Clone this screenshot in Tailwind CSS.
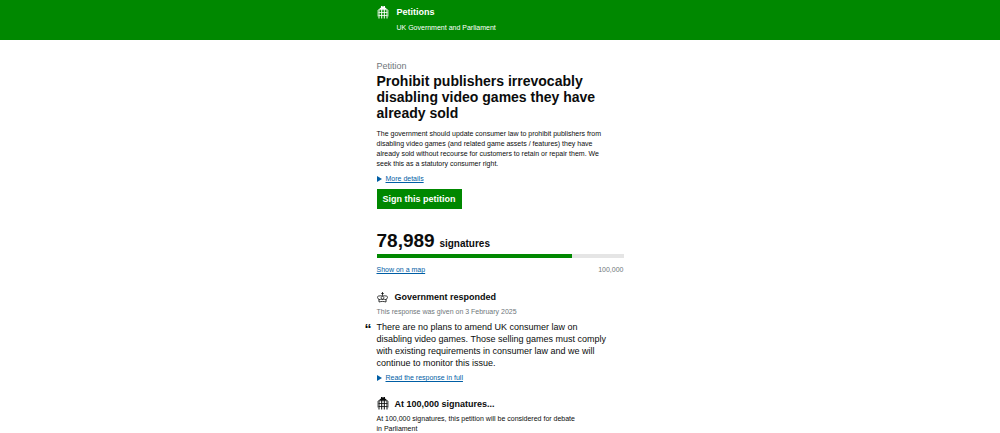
<!DOCTYPE html>
<html lang="en">

<head>
    <meta charset="UTF-8">
    <meta name="viewport" content="width=device-width, initial-scale=1.0">
    <title>Prohibit publishers irrevocably disabling video games they have already sold - Petitions</title>
    <script src="https://cdn.jsdelivr.net/npm/@tailwindcss/browser@4"></script>
</head>

<body class="bg-white font-['Liberation_Sans',Arial,sans-serif] text-[7px] leading-[10px] text-[#0b0c0c]">
    <!-- Portcullis symbol, used in the header and the debate section -->
    <svg class="hidden" aria-hidden="true">
        <symbol id="portcullis" viewBox="0 0 11 13">
            <path d="M3.500 0h1v.6h.6V0h.8v.6h.6V0h1v1.500l1.500 1v.7H2v-.7l1.500-1z" fill="currentColor" />
            <path d="M1.500 3.500v9M4.200 3v9.500M6.800 3v9.500M9.500 3.500v9" fill="none" stroke="currentColor" stroke-width="1" />
            <path d="M1 3.700h9M1 6.500h9M1 9.500h9" fill="none" stroke="currentColor" stroke-width=".8" />
            <path d="M.3 4v6.500M10.700 4v6.500" fill="none" stroke="currentColor" stroke-width=".5" />
        </symbol>
    </svg>

    <!-- Header -->
    <header class="bg-[#008800] text-white">
        <div class="mx-auto flex w-full max-w-[247px] gap-2 pt-[6px] pb-[7px]">
            <svg class="h-[13px] w-3"><use href="#portcullis" /></svg>
            <div>
                <a href="#" class="block text-[9px] leading-[13px] font-bold">Petitions</a>
                <p class="mt-1">UK Government and Parliament</p>
            </div>
        </div>
    </header>

    <!-- Main Content -->
    <main class="mx-auto w-full max-w-[247px] pt-5">
        <h1 class="text-[14px] leading-4 font-bold">
            <span class="block text-[9px] leading-[13px] font-normal text-[#6f777b]">Petition</span>
            Prohibit publishers irrevocably disabling video games they have already sold
        </h1>
        <p class="mt-2 pr-3">The government should update consumer law to prohibit publishers from disabling video games (and related game assets / features) they have already sold without recourse for customers to retain or repair them. We seek this as a statutory consumer right.</p>
        <details class="mt-[5px]">
            <summary class="flex list-none items-center gap-1 text-[#005ea5]">
                <svg class="h-[6px] w-[5px]" viewBox="0 0 5 6" fill="currentColor"><path d="M0 0l5 3-5 3z" /></svg>
                <span class="underline">More details</span>
            </summary>
        </details>
        <button type="button" class="mt-[5px] block bg-[#008800] px-[6px] py-1 text-[9px] leading-[12px] font-bold text-white">Sign this petition</button>

        <!-- Signature count -->
        <section class="mt-[22px]">
            <p class="text-[10px] leading-5 font-bold"><span class="mr-[2px] text-[19px]">78,989</span> signatures</p>
            <div class="h-1 bg-[#e5e5e5]">
                <div class="h-1 bg-[#008800]" style="width: 79%"></div>
            </div>
            <div class="mt-[7px] flex justify-between">
                <a href="#" class="text-[#005ea5] underline">Show on a map</a>
                <span class="text-[#6f777b]">100,000</span>
            </div>
        </section>

        <!-- Government response -->
        <section class="mt-4">
            <h2 class="flex items-center gap-[7px] text-[9px] leading-[12px] font-bold">
                <svg class="h-[11px] w-[11px]" viewBox="0 0 22 22" fill="none" stroke="currentColor" stroke-width="1.600">
                    <path d="M11 0v7M8.500 3h5" />
                    <path d="M4 15C0 12 0 8 4 8c4-1 6 0 7 0s3-1 7 0c4 0 4 4 0 7" />
                    <path d="M11 8c-4 2-3 5 0 7 3-2 4-5 0-7M3 15.500c5-1.500 11-1.500 16 0M4 20c5-1.500 9-1.500 14 0M4 15v5M18 15v5" />
                </svg>
                Government responded
            </h2>
            <p class="mt-1 text-[#6f777b]">This response was given on 3 February 2025</p>
            <blockquote class="relative mt-1 pr-3 text-[9px] leading-[12px]">
                <span class="absolute top-0 -left-3 text-[14px] leading-4 font-bold">“</span>
                There are no plans to amend UK consumer law on disabling video games. Those selling games must comply with existing requirements in consumer law and we will continue to monitor this issue.
            </blockquote>
            <details class="mt-1">
                <summary class="flex list-none items-center gap-1 text-[#005ea5]">
                    <svg class="h-[6px] w-[5px]" viewBox="0 0 5 6" fill="currentColor"><path d="M0 0l5 3-5 3z" /></svg>
                    <span class="underline">Read the response in full</span>
                </summary>
            </details>
        </section>

        <!-- Debate threshold -->
        <section class="mt-[14px]">
            <h2 class="flex items-center gap-[6px] text-[9px] leading-[12px] font-bold">
                <svg class="h-[13px] w-3"><use href="#portcullis" /></svg>
                At 100,000 signatures...
            </h2>
            <p class="mt-1 pr-11">At 100,000 signatures, this petition will be considered for debate in Parliament</p>
        </section>
    </main>
</body>

</html>
